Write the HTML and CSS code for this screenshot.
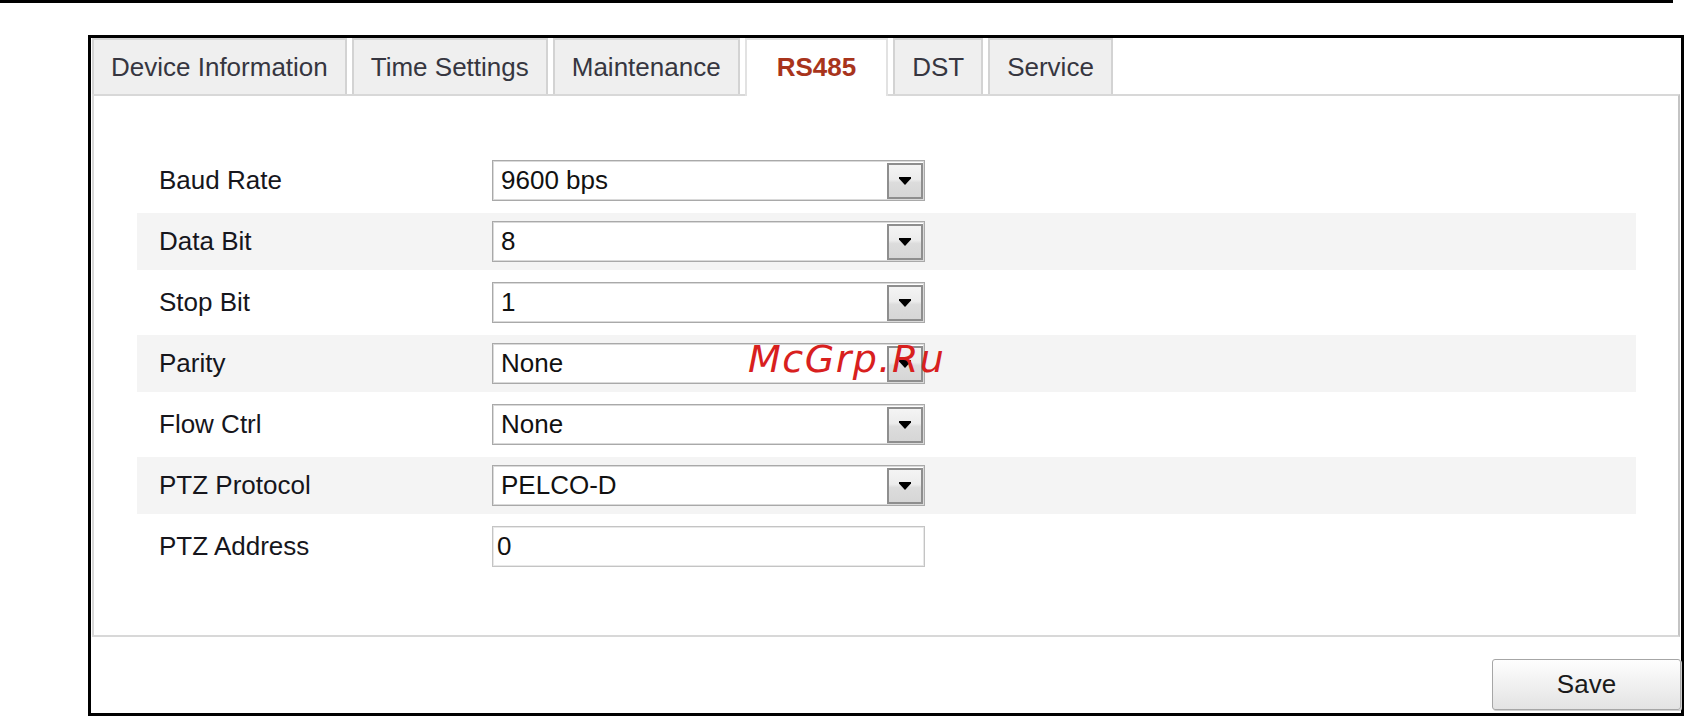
FILE: index.html
```html
<!DOCTYPE html>
<html>
<head>
    <title>RS485</title>
    <link rel="stylesheet" href="styles.css">
</head>
<body>
    <div class="topline"></div>

    <div class="frame">
        <div class="tabs">
            <div class="tab">Device Information</div>
            <div class="tab">Time Settings</div>
            <div class="tab">Maintenance</div>
            <div class="tab active">RS485</div>
            <div class="tab">DST</div>
            <div class="tab">Service</div>
        </div>

        <div class="panel">
            <div class="row">
                <div class="label">Baud Rate</div>
                <div class="select">
                    <span class="value">9600 bps</span>
                    <span class="arrow"><svg width="12" height="8" viewBox="0 0 12 8"><polygon points="0,0 12,0 12,1.5 6,8 0,1.5" fill="#000"/></svg></span>
                </div>
            </div>
            <div class="row alt">
                <div class="label">Data Bit</div>
                <div class="select">
                    <span class="value">8</span>
                    <span class="arrow"><svg width="12" height="8" viewBox="0 0 12 8"><polygon points="0,0 12,0 12,1.5 6,8 0,1.5" fill="#000"/></svg></span>
                </div>
            </div>
            <div class="row">
                <div class="label">Stop Bit</div>
                <div class="select">
                    <span class="value">1</span>
                    <span class="arrow"><svg width="12" height="8" viewBox="0 0 12 8"><polygon points="0,0 12,0 12,1.5 6,8 0,1.5" fill="#000"/></svg></span>
                </div>
            </div>
            <div class="row alt">
                <div class="label">Parity</div>
                <div class="select">
                    <span class="value">None</span>
                    <span class="arrow"><svg width="12" height="8" viewBox="0 0 12 8"><polygon points="0,0 12,0 12,1.5 6,8 0,1.5" fill="#000"/></svg></span>
                </div>
            </div>
            <div class="row">
                <div class="label">Flow Ctrl</div>
                <div class="select">
                    <span class="value">None</span>
                    <span class="arrow"><svg width="12" height="8" viewBox="0 0 12 8"><polygon points="0,0 12,0 12,1.5 6,8 0,1.5" fill="#000"/></svg></span>
                </div>
            </div>
            <div class="row alt">
                <div class="label">PTZ Protocol</div>
                <div class="select">
                    <span class="value">PELCO-D</span>
                    <span class="arrow"><svg width="12" height="8" viewBox="0 0 12 8"><polygon points="0,0 12,0 12,1.5 6,8 0,1.5" fill="#000"/></svg></span>
                </div>
            </div>
            <div class="row">
                <div class="label">PTZ Address</div>
                <div class="input">0</div>
            </div>
        </div>

        <div class="footer">
            <button class="save">Save</button>
        </div>
    </div>

    <div class="watermark">McGrp.Ru</div>
</body>
</html>
```

FILE: styles.css
```css
body{
    margin: 0;
    background-color: #fff;
    font-family: "Liberation Sans", Arial, Helvetica, sans-serif;
}
.topline{
    width: 1673px;
    height: 3px;
    background-color: #000;
}
.frame{
    box-sizing: border-box;
    width: 1596px;
    height: 681px;
    margin: 32px 0 0 88px;
    border: 3px solid #000;
    padding-left: 1px;
    display: flex;
    flex-direction: column;
}

/* tabs */
.tabs{
    display: flex;
    gap: 5px;
    height: 56px;
}
.tab{
    box-sizing: border-box;
    height: 56px;
    padding: 0 17px;
    border: 2px solid #d3d3d3;
    border-bottom: 0;
    background-color: #efefef;
    color: #363640;
    font-size: 26px;
    line-height: 54px;
}
.tab.active{
    position: relative;
    z-index: 1;
    height: 58px;
    padding: 0 30px;
    border-color: #e2e2e2;
    background-color: #fff;
    color: #a8341c;
    font-weight: 700;
}

/* settings panel */
.panel{
    box-sizing: border-box;
    height: 543px;
    margin-right: 1px;
    border: 2px solid #d8d8d8;
    border-right-color: #c4c4c4;
    padding: 56px 42px 0 43px;
    display: flex;
    flex-direction: column;
    gap: 4px;
}
.row{
    display: flex;
    align-items: center;
    height: 57px;
}
.alt{
    background-color: #f4f4f4;
}
.label{
    flex: none;
    width: 333px;
    padding-left: 22px;
    font-size: 26px;
    color: #16161c;
}
.select{
    box-sizing: border-box;
    display: flex;
    width: 433px;
    height: 41px;
    border: 1px solid #a9a9a9;
    box-shadow: inset 0 0 0 1px #dadada;
    background-color: #fff;
}
.value{
    flex: 1;
    padding-left: 8px;
    font-size: 26px;
    line-height: 39px;
    color: #111;
}
.arrow{
    box-sizing: border-box;
    width: 36px;
    margin: 2px 1px 1px 0;
    border: 2px solid #8e8e8e;
    background: linear-gradient(#f4f4f4 0%, #ececec 45%, #dcdcdc 55%, #d6d6d6 100%);
    display: flex;
    align-items: center;
    justify-content: center;
}
.input{
    box-sizing: border-box;
    width: 433px;
    height: 41px;
    border: 1px solid #c4c4c4;
    box-shadow: inset 0 0 0 1px #e8e8e8;
    padding-left: 4px;
    font-size: 26px;
    line-height: 39px;
    color: #111;
}

/* bottom */
.footer{
    display: flex;
    justify-content: flex-end;
    padding-top: 22px;
}
.save{
    box-sizing: border-box;
    width: 189px;
    height: 51px;
    border: 1px solid #a6a6a6;
    border-radius: 3px;
    box-shadow: 1px 1px 0 #cfcfcf;
    background: linear-gradient(#fefefe, #e3e3e3);
    font-family: "Liberation Sans", Arial, sans-serif;
    font-size: 26px;
    color: #1a1a1a;
}

.watermark{
    position: absolute;
    left: 748px;
    top: 340px;
    font-family: "DejaVu Sans", sans-serif;
    font-style: italic;
    font-size: 38px;
    line-height: 38px;
    letter-spacing: 1.5px;
    color: #d8201e;
}
```
